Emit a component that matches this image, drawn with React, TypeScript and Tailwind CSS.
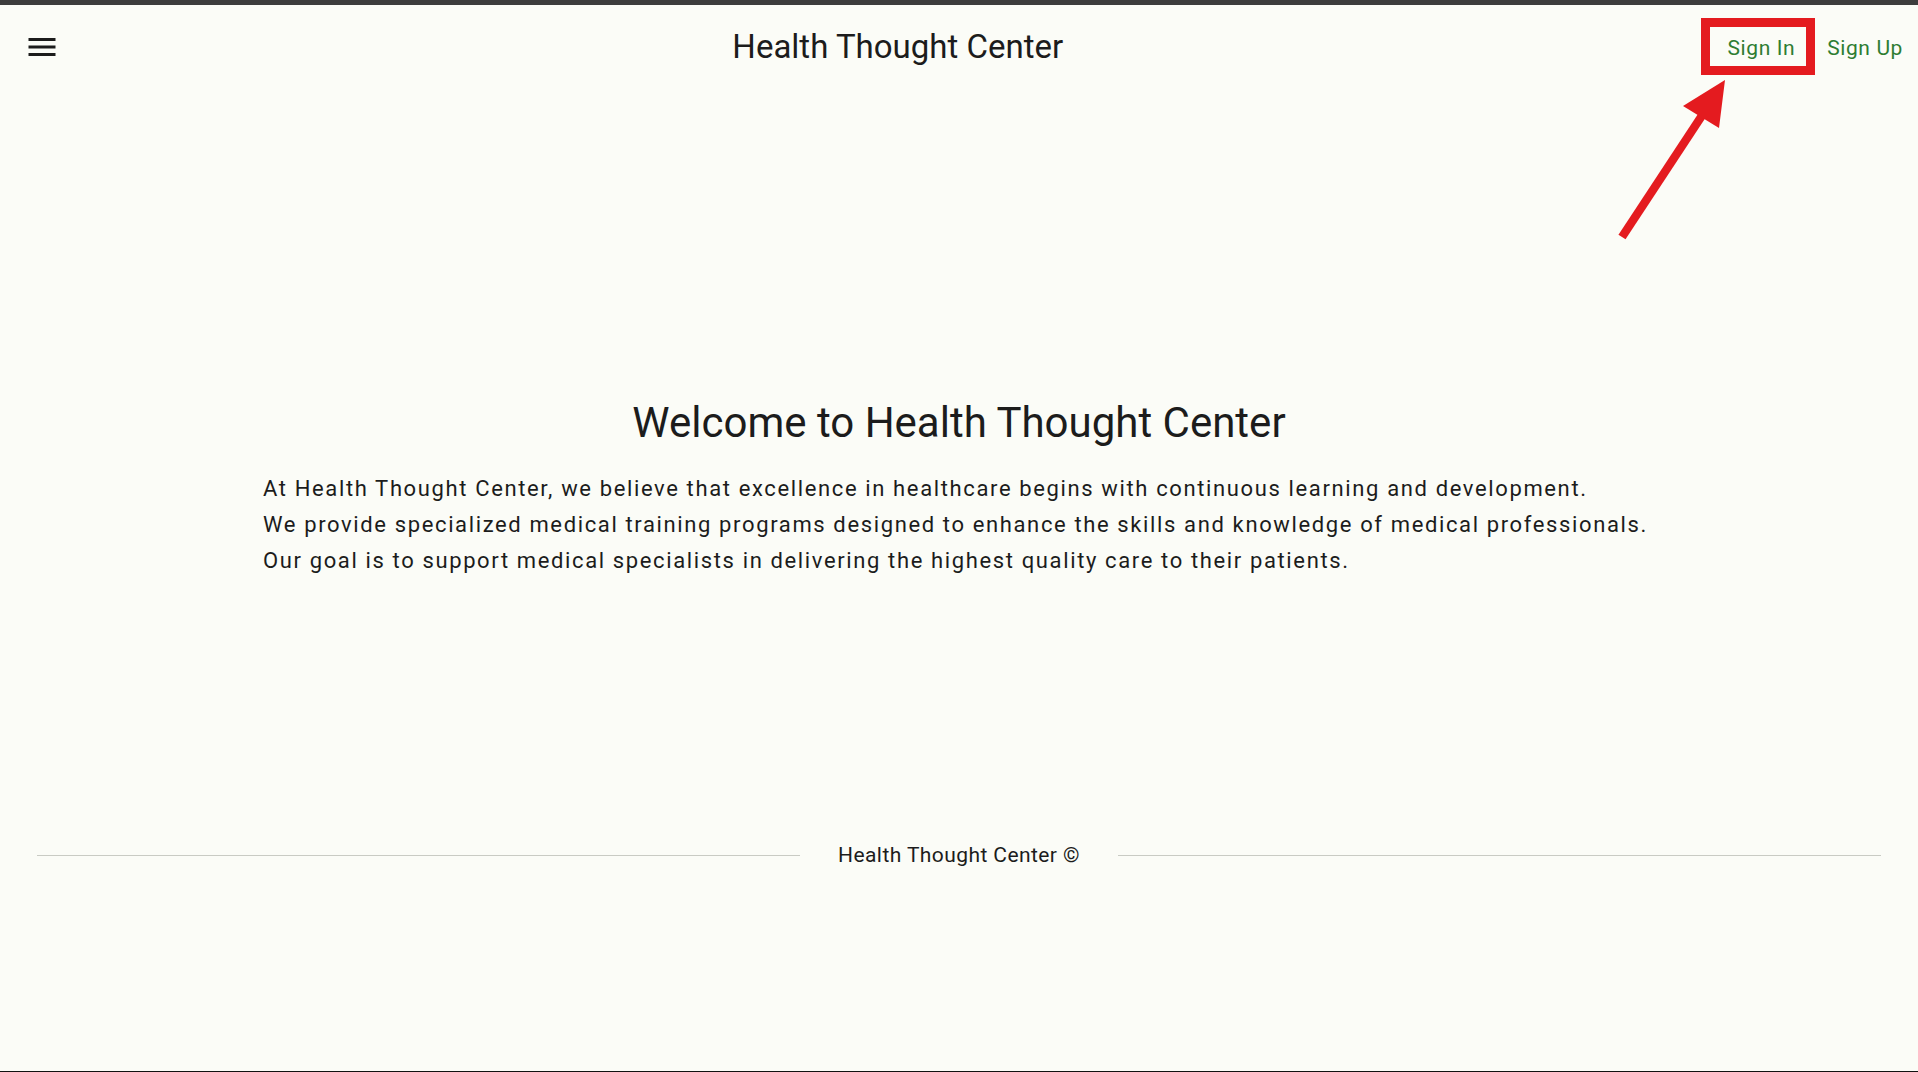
function Header() {
  return (
    <header className="flex h-[84px] items-center px-4 pr-[7px]">
      <button className="flex items-center justify-center p-2 text-[#1c1c1c]">
        <svg width="36" height="36" viewBox="0 0 24 24" fill="currentColor">
          <path d="M3 18h18v-2H3zm0-5h18v-2H3zm0-7v2h18V6z" />
        </svg>
      </button>
      <h1 className="flex-1 pl-[8px] text-center text-[33px] leading-[1.2] font-normal text-[#1c1c1c]">
        Health Thought Center
      </h1>
      <nav className="mt-[3px] flex items-center gap-[16px]">
        <button className="px-2 text-[21px] leading-[1.75] tracking-[0.02857em] text-[#2e7d32]">Sign In</button>
        <button className="px-2 text-[21px] leading-[1.75] tracking-[0.02857em] text-[#2e7d32]">Sign Up</button>
      </nav>
    </header>
  );
}

// annotation drawn over the screenshot: red box + arrow pointing at Sign In
function Annotation() {
  return (
    <>
      <div className="pointer-events-none absolute top-[18px] left-[1701px] h-[57px] w-[114px] border-[9px] border-[#e41b1f]" />
      <svg className="pointer-events-none absolute top-0 left-0" width="1918" height="260">
        <line x1="1622" y1="237" x2="1703" y2="114" stroke="#e41b1f" strokeWidth="8.5" />
        <polygon points="1725,80 1683,106 1719,128" fill="#e41b1f" />
      </svg>
    </>
  );
}

export default function App() {
  return (
    <div
      className="relative flex h-[1072px] flex-col overflow-hidden border-b border-[#111] bg-[#fbfcf7]"
      style={{ fontFamily: 'Roboto, "Liberation Sans", sans-serif' }}
    >
      <div className="h-[5px] bg-[#3d3d3d]" />
      <Header />

      <main className="flex flex-col items-center pt-[309px]">
        <h2 className="text-center text-[42px] leading-[1.2] font-normal text-[#1c1c1c]">
          Welcome to Health Thought Center
        </h2>
        <div className="mt-[23px] w-[1392px] text-[22px] leading-[36px] tracking-[0.074em] text-[#1c1c1c]">
          <p>At Health Thought Center, we believe that excellence in healthcare begins with continuous learning and development.</p>
          <p>We provide specialized medical training programs designed to enhance the skills and knowledge of medical professionals.</p>
          <p>Our goal is to support medical specialists in delivering the highest quality care to their patients.</p>
        </div>
      </main>

      <footer className="mt-[261px] flex h-[30px] items-center gap-[38px] px-[37px]">
        <div className="h-[1.5px] flex-1 bg-[#c9cbc4]" />
        <span className="text-[21px] tracking-[0.02em] text-[#1c1c1c]">Health Thought Center ©</span>
        <div className="h-[1.5px] flex-1 bg-[#c9cbc4]" />
      </footer>

      <Annotation />
    </div>
  );
}
